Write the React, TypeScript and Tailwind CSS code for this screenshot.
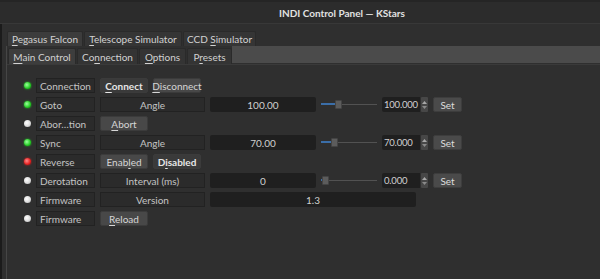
import React from "react";

type Btn = { text: string; u: number; active?: boolean };

type Row = {
  led: "green" | "white" | "red";
  label: string;
  kind: "switch" | "number" | "text";
  buttons?: Btn[];
  caption?: string;
  value?: string;
  spin?: string;
  knob?: number;
};

const rows: Row[] = [
  { led: "green", label: "Connection", kind: "switch", buttons: [{ text: "Connect", u: 0, active: true }, { text: "Disconnect", u: 0 }] },
  { led: "green", label: "Goto", kind: "number", caption: "Angle", value: "100.00", spin: "100.000", knob: 14 },
  { led: "white", label: "Abor…tion", kind: "switch", buttons: [{ text: "Abort", u: 0 }] },
  { led: "green", label: "Sync", kind: "number", caption: "Angle", value: "70.00", spin: "70.000", knob: 10 },
  { led: "red", label: "Reverse", kind: "switch", buttons: [{ text: "Enabled", u: 4 }, { text: "Disabled", u: 1, active: true }] },
  { led: "white", label: "Derotation", kind: "number", caption: "Interval (ms)", value: "0", spin: "0.000", knob: 1 },
  { led: "white", label: "Firmware", kind: "text", caption: "Version", value: "1.3" },
  { led: "white", label: "Firmware", kind: "switch", buttons: [{ text: "Reload", u: 0 }] },
];

const Mnemonic = ({ text, u }: { text: string; u: number }) => (
  <>
    {text.slice(0, u)}
    <u className="underline-offset-2">{text[u]}</u>
    {text.slice(u + 1)}
  </>
);

const Led = ({ color }: { color: Row["led"] }) => {
  const cls =
    color === "green"
      ? "bg-[radial-gradient(circle_at_40%_40%,#9cff9c,#22cc22_60%,#118811)] shadow-[0_0_2px_#22cc22]"
      : color === "red"
      ? "bg-[radial-gradient(circle_at_40%_40%,#ff8a8a,#e61e1e_60%,#991010)] shadow-[0_0_2px_#e61e1e]"
      : "bg-[radial-gradient(circle_at_40%_40%,#ffffff,#d8d8d8_60%,#9a9a9a)]";
  return <div className={`w-[7px] h-[7px] rounded-full shrink-0 ${cls}`} />;
};

const PushButton = ({ b }: { b: Btn }) => (
  <div
    className={`w-[48px] h-[15px] flex items-center justify-center rounded-[2px] border border-[#3b3b3b] ${
      b.active ? "bg-[#3a3a3a] font-bold text-[#e6e6e6]" : "bg-[#484848] text-[#d6d6d6]"
    }`}
  >
    <span>
      <Mnemonic text={b.text} u={b.u} />
    </span>
  </div>
);

const Slider = ({ knob }: { knob: number }) => (
  <div className="relative w-[56px] h-[15px] shrink-0">
    <div className="absolute left-0 right-0 top-[7px] h-[1px] bg-[#525252]" />
    <div className="absolute left-0 top-[6px] h-[2px] bg-[#3b6ea8]" style={{ width: knob }} />
    <div
      className="absolute top-[3px] w-[7px] h-[9px] rounded-[1px] bg-[#5c5c5c] border border-[#444444]"
      style={{ left: knob }}
    />
  </div>
);

const SpinBox = ({ value }: { value: string }) => (
  <div className="flex w-[46px] h-[15px] shrink-0">
    <div className="w-[38px] bg-[#1f1f1f] rounded-l-[2px] flex items-center pl-[2px] text-[9.5px] tracking-[-0.2px] text-[#d0d0d0] overflow-hidden">
      {value}
    </div>
    <div className="w-[7px] ml-[1px] bg-[#474747] rounded-[1px] flex flex-col items-center justify-center gap-[2px]">
      <svg width="5" height="3" viewBox="0 0 5 3">
        <path d="M0 3 L2.5 0 L5 3 Z" fill="#a8a8a8" />
      </svg>
      <svg width="5" height="3" viewBox="0 0 5 3">
        <path d="M0 0 L2.5 3 L5 0 Z" fill="#8a8a8a" />
      </svg>
    </div>
  </div>
);

const BoxLabel = ({ children, className = "" }: { children: React.ReactNode; className?: string }) => (
  <div className={`h-[15px] flex items-center bg-[#2b2b2b] border border-[#222222] shrink-0 ${className}`}>{children}</div>
);

const PropertyRow = ({ row }: { row: Row }) => (
  <div className="flex items-center gap-[5px] h-[15px]">
    <Led color={row.led} />
    <BoxLabel className="w-[59px] pl-[3px] text-[#c4c4c4]">{row.label}</BoxLabel>
    {row.kind === "switch" && (
      <div className="flex gap-[5px]">
        {row.buttons!.map((b) => (
          <PushButton key={b.text} b={b} />
        ))}
      </div>
    )}
    {row.kind !== "switch" && (
      <BoxLabel className="w-[105px] justify-center text-[#c4c4c4]">{row.caption}</BoxLabel>
    )}
    {row.kind === "number" && (
      <>
        <div className="w-[106px] h-[15px] bg-[#1f1f1f] rounded-[2px] flex items-center justify-center text-[#d0d0d0] shrink-0">
          {row.value}
        </div>
        <Slider knob={row.knob!} />
        <SpinBox value={row.spin!} />
        <div className="w-[29px] h-[15px] flex items-center justify-center rounded-[2px] bg-[#4a4a4a] border border-[#3d3d3d] text-[#dcdcdc]">
          Set
        </div>
      </>
    )}
    {row.kind === "text" && (
      <div className="w-[206px] h-[15px] bg-[#1f1f1f] rounded-[2px] flex items-center justify-center text-[#d0d0d0] shrink-0">
        {row.value}
      </div>
    )}
  </div>
);

const outerTabs = [
  { text: "Pegasus Falcon", u: 0, w: "w-[76px]", active: true },
  { text: "Telescope Simulator", u: 0, w: "w-[98px]" },
  { text: "CCD Simulator", u: 4, w: "w-[73px]" },
];

const innerTabs = [
  { text: "Main Control", u: 0, w: "w-[68px]", active: true },
  { text: "Connection", u: 2, w: "w-[61px]" },
  { text: "Options", u: 0, w: "w-[47px]" },
  { text: "Presets", u: 1, w: "w-[45px]" },
];

export default function App() {
  return (
    <div className="w-[600px] h-[279px] overflow-hidden bg-[#2f2f2f] flex flex-col text-[10px] leading-none font-['Lato','Liberation_Sans',sans-serif]">
      <div className="h-[24px] shrink-0 bg-[#2c2c2c] border-t-[2px] border-[#252525] border-b border-b-[#383838] flex items-center justify-center pl-[84px]">
        <span className="font-bold text-[#e2e2e2] text-[10px]">INDI Control Panel — KStars</span>
      </div>
      <div className="flex flex-1">
        <div className="w-[2px] bg-[#1b1b1b] shrink-0" />
        <div className="flex-1 flex flex-col pl-[4px]">
          <div className="flex gap-[1px] pl-[1px] pt-[7px] h-[22px] shrink-0">
            {outerTabs.map((t) => (
              <div
                key={t.text}
                className={`${t.w} h-[15px] flex items-center justify-center rounded-t-[2px] border border-b-0 border-[#2a2a2a] text-[#d2d2d2] ${
                  t.active ? "bg-[#3c3c3c]" : "bg-[#353535]"
                }`}
              >
                <span>
                  <Mnemonic text={t.text} u={t.u} />
                </span>
              </div>
            ))}
          </div>
          <div className="flex-1 flex flex-col border-l border-[#464646]">
            <div className="flex h-[18px] shrink-0">
              <div className="flex gap-[1px] pt-[2px] pl-[1px]">
                {innerTabs.map((t) => (
                  <div
                    key={t.text}
                    className={`${t.w} h-[16px] flex items-center justify-center rounded-t-[2px] border border-b-0 border-[#2a2a2a] text-[#d2d2d2] ${
                      t.active ? "bg-[#3d3d3d]" : "bg-[#343434]"
                    }`}
                  >
                    <span>
                      <Mnemonic text={t.text} u={t.u} />
                    </span>
                  </div>
                ))}
              </div>
              <div className="flex-1 bg-[#4b4b4b] mb-[1px]" />
            </div>
            <div className="flex-1 flex flex-col gap-[4px] pl-[17px] pt-[13px] border-t border-[#3a3a3a]">
              {rows.map((r, i) => (
                <PropertyRow key={i} row={r} />
              ))}
            </div>
          </div>
        </div>
      </div>
    </div>
  );
}
